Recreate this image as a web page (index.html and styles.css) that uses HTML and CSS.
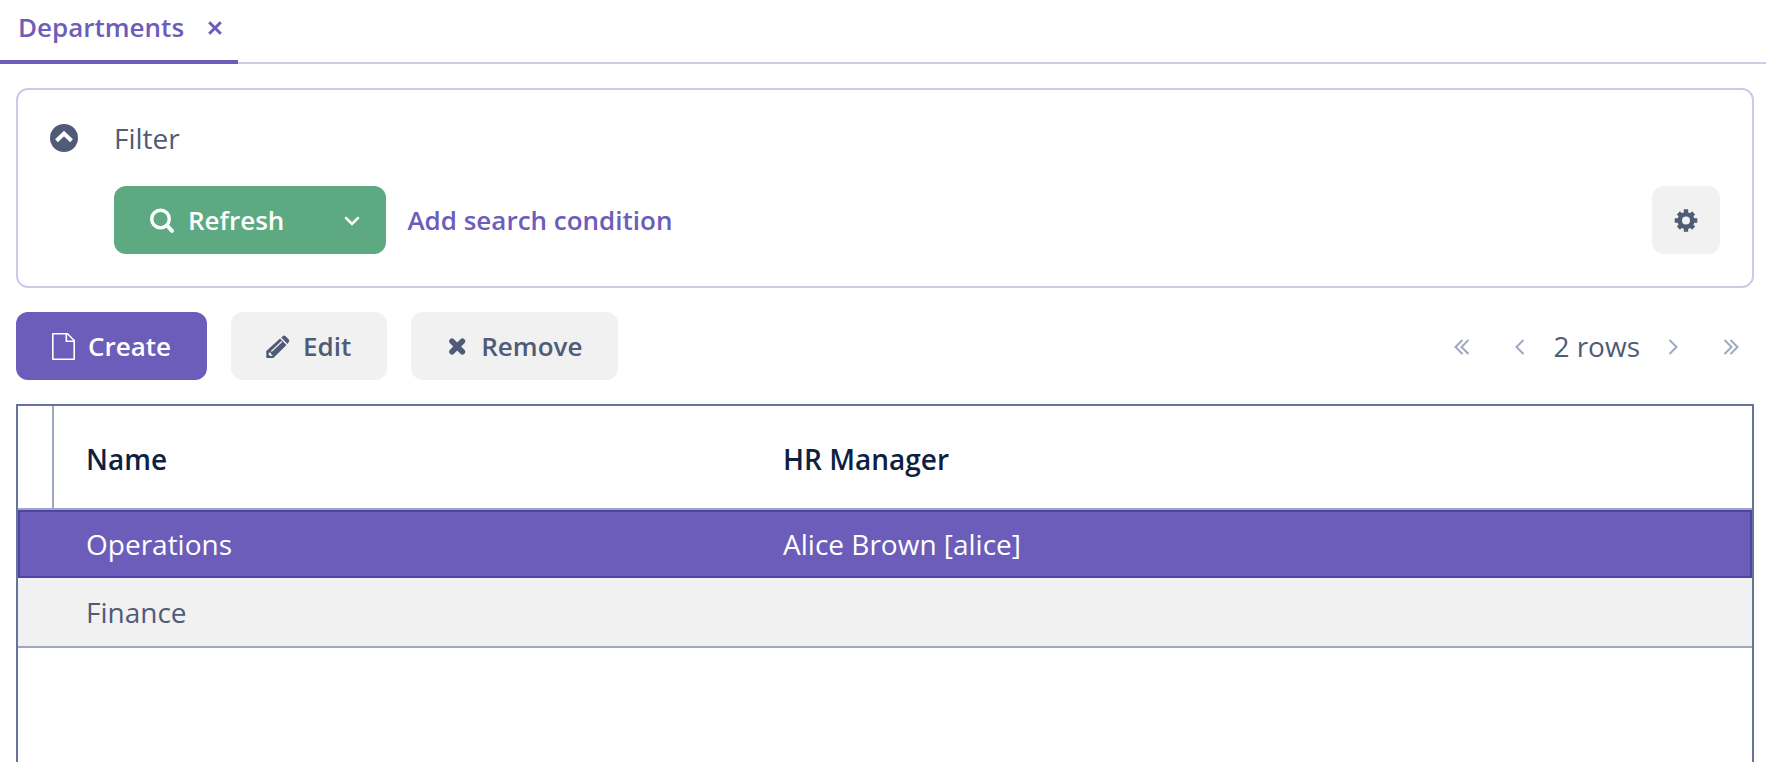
FILE: index.html
```html
<!DOCTYPE html>
<html lang="en">
<head>
<meta charset="utf-8">
<title>Departments</title>
<link rel="stylesheet" href="styles.css">
</head>
<body>
<nav class="tabs">
  <div class="tab">
    <a class="tab-link" href="#departments">Departments</a>
    <button class="tab-close" type="button" aria-label="Close tab">
      <svg class="icon-small" viewBox="0 0 14 14"><path d="M1.200 2.200l11.600 11.600M12.800 2.200L1.200 13.800" fill="none" stroke="currentColor" stroke-width="3"/></svg>
    </button>
  </div>
</nav>
<main class="view" id="departments">
  <section class="filter">
    <button class="filter-toggle" type="button" aria-label="Collapse filter">
      <svg class="icon-large" viewBox="0 0 28 28"><circle cx="14" cy="14" r="14" fill="currentColor"/><path d="M6.500 16.800l7.500-7.300 7.500 7.300" fill="none" stroke="#fff" stroke-width="4"/></svg>
    </button>
    <div class="filter-body">
      <h2 class="filter-title">Filter</h2>
      <div class="filter-row">
        <div class="split">
          <button class="button split-main" type="button">
            <svg class="icon" viewBox="0 0 24 24"><g fill="none" stroke="currentColor"><circle cx="10.500" cy="11" r="8.800" stroke-width="3.400"/><path d="M17 17.500l5 5.300" stroke-width="4" stroke-linecap="round"/></g></svg>
            Refresh
          </button>
          <button class="button split-caret" type="button" aria-label="More refresh actions">
            <svg class="icon" viewBox="0 0 24 24"><path d="M6 10l6 6 6-6" fill="none" stroke="currentColor" stroke-width="2.500" stroke-linecap="round"/></svg>
          </button>
        </div>
        <button class="button link" type="button">Add search condition</button>
        <button class="button square" type="button" aria-label="Filter settings">
          <svg class="icon" viewBox="0 0 24 24"><g fill="none" stroke="currentColor"><circle cx="12" cy="12.500" r="6.300" stroke-width="4.600"/><path d="M12 1.200v5M12 18.800v5M.7 12.500h5M18.300 12.500h5M4.400 4.900l3.500 3.500M16.100 16.600l3.500 3.500M4.400 20.100l3.500-3.500M16.100 8.400l3.500-3.500" stroke-width="4.400"/></g></svg>
        </button>
      </div>
    </div>
  </section>

  <div class="toolbar">
    <button class="button primary" type="button">
      <svg class="icon" viewBox="0 0 24 24"><path d="M.8-.2h14.700l6.700 6.700v18.700H.8zM14.300-.2v7.400h7.900" fill="none" stroke="currentColor" stroke-width="1.600" stroke-linejoin="round"/></svg>
      Create
    </button>
    <button class="button" type="button">
      <svg class="icon" viewBox="0 0 24 24"><path d="M-.7 24v-7L13 4.500l6.500 6.500L6.300 24zM14.200 3.500l1.800-1.600q1.200-1 2.400 0l3.400 3.700q1 1.200 0 2.400L20.600 10z" fill="currentColor"/><path d="M4.300 17.500L14.800 7.500" stroke="#f1f1f1" stroke-width="1.200"/><path d="M2 18.500l2 .3.300 1.900 1.700.4-1.300 1H3.300l-1.800-1.600z" fill="#f1f1f1"/></svg>
      Edit
    </button>
    <button class="button" type="button">
      <svg class="icon-medium" viewBox="0 0 22 22"><path d="M5 6.800l10.400 10.400M15.400 6.800L5 17.200" transform="translate(0 -.5)" fill="none" stroke="currentColor" stroke-width="5.600" stroke-linecap="round"/></svg>
      Remove
    </button>
    <div class="pager">
      <button class="pager-button" type="button" aria-label="First page"><svg class="icon" viewBox="0 0 24 24"><path d="M12.500 6l-7 7 7 7M18.500 6l-7 7 7 7"/></svg></button>
      <button class="pager-button" type="button" aria-label="Previous page"><svg class="icon" viewBox="0 0 24 24"><path d="M15.500 6l-7 7 7 7"/></svg></button>
      <span class="pager-text">2 rows</span>
      <button class="pager-button" type="button" aria-label="Next page"><svg class="icon" viewBox="0 0 24 24"><path d="M8.500 6l7 7-7 7"/></svg></button>
      <button class="pager-button" type="button" aria-label="Last page"><svg class="icon" viewBox="0 0 24 24"><path d="M5.500 6l7 7-7 7M11.500 6l7 7-7 7"/></svg></button>
    </div>
  </div>

  <div class="grid">
    <table class="table">
      <colgroup><col class="col-mark"><col class="col-name"><col></colgroup>
      <thead>
        <tr><td class="mark"></td><th scope="col">Name</th><th scope="col">HR Manager</th></tr>
      </thead>
      <tbody>
        <tr class="selected"><td></td><td>Operations</td><td>Alice Brown [alice]</td></tr>
        <tr class="alternate"><td></td><td>Finance</td><td></td></tr>
      </tbody>
    </table>
  </div>
</main>
</body>
</html>
```
FILE: styles.css
```css
* {
  box-sizing: border-box;
}

body {
  margin: 0;
  min-height: 100vh;
  display: flex;
  flex-direction: column;
  background: #fff;
  color: #505b77;
  font: 400 28px/36px "Open Sans", sans-serif;
}

button {
  margin: 0;
  padding: 0;
  border: 0;
  background: none;
  color: inherit;
  font: inherit;
  cursor: pointer;
}

svg {
  display: block;
  flex: none;
  overflow: visible;
}

.icon {
  width: 24px;
  height: 24px;
}

.icon-small {
  width: 14px;
  height: 14px;
}

.icon-medium {
  width: 22px;
  height: 22px;
}

.icon-large {
  width: 28px;
  height: 28px;
}

.tabs {
  display: flex;
  box-shadow: inset 0 -2px #cfc9ea;
}

.tab {
  display: flex;
  align-items: center;
  gap: 24px;
  padding: 0 16px 6px 18px;
  height: 64px;
  border-bottom: 4px solid #6c5dba;
  color: #6c5dba;
  font-size: 26px;
  font-weight: 600;
}

.tab-link {
  color: inherit;
  text-decoration: none;
}

.view {
  flex: 1;
  display: flex;
  flex-direction: column;
  gap: 24px;
  padding: 24px 12px 0 16px;
}

.filter {
  display: flex;
  align-items: flex-start;
  gap: 36px;
  padding: 30px 32px 32px;
  border: 2px solid #cfc9ea;
  border-radius: 12px;
}

.filter-toggle {
  padding-top: 4px;
}

.filter-body {
  flex: 1;
}

.filter-title {
  margin: 0 0 30px;
  font-size: 28px;
  font-weight: 400;
}

.filter-row,
.toolbar {
  display: flex;
  align-items: center;
}

.button {
  display: flex;
  align-items: center;
  gap: 12px;
  height: 68px;
  padding: 0 36px;
  border-radius: 12px;
  background: #f1f1f1;
  font-size: 26px;
  font-weight: 600;
  white-space: nowrap;
}

.split {
  display: flex;
  color: #fff;
}

.split .button {
  background: #5ca982;
}

.split-main {
  gap: 14px;
  padding-right: 34px;
  border-radius: 12px 0 0 12px;
}

.split-caret {
  padding: 0 22px;
  border-radius: 0 12px 12px 0;
}

.link {
  padding: 0 21px;
  background: none;
  color: #6c5dba;
}

.square {
  margin-left: auto;
  padding: 0 22px;
}

.toolbar {
  gap: 24px;
}

.primary {
  background: #6c5dba;
  color: #fff;
}

.pager {
  display: flex;
  align-items: center;
  gap: 12px;
  margin-left: auto;
}

.pager-button {
  padding: 0 11px;
  color: #9ea9c1;
}

.pager-button path {
  fill: none;
  stroke: currentColor;
  stroke-width: 2;
}

.pager-text {
  margin: 0 -2px;
}

.grid {
  flex: 1;
  border: 2px solid #68739a;
  border-bottom: 0;
}

.table {
  width: 100%;
  table-layout: fixed;
  border-spacing: 0;
}

.col-mark {
  width: 36px;
}

.col-name {
  width: 40.2%;
}

.table th,
.table td {
  height: 68px;
  padding: 0 0 0 32px;
  text-align: left;
}

.table thead th,
.table thead .mark {
  height: 104px;
  padding-top: 4px;
  border-bottom: 2px solid #9ea9c1;
  color: #0f1f42;
  font-weight: 600;
}

.table thead .mark {
  border-right: 2px solid #9ea9c1;
}

.selected td {
  background: #6c5dba;
  color: #fff;
}

.selected {
  outline: 2px solid #5042a6;
  outline-offset: -2px;
}

.table .alternate td {
  height: 70px;
  background: #f1f1f1;
  border-bottom: 2px solid #9ea9c1;
}
```
